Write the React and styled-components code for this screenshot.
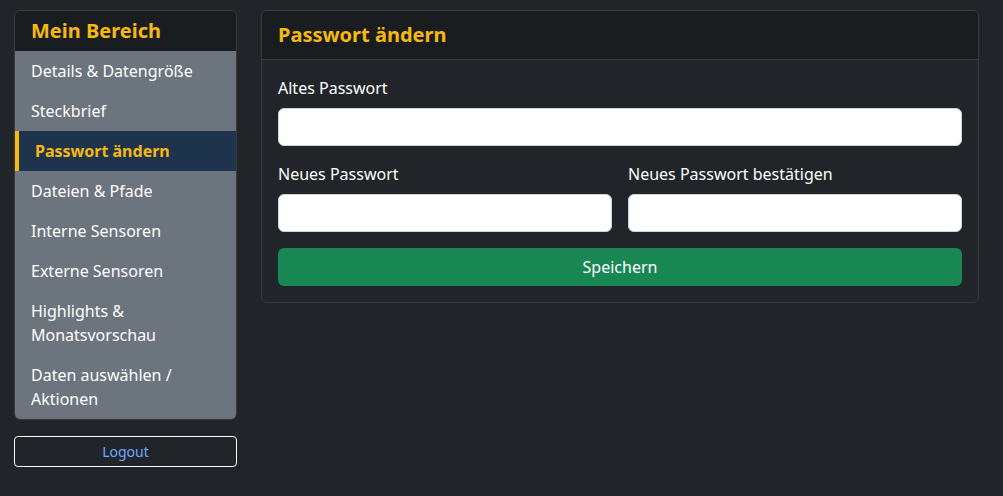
import React from 'react';
import styled, { createGlobalStyle } from 'styled-components';

const GlobalStyle = createGlobalStyle`
  html, body {
    margin: 0;
    background-color: #212529;
    color: #dee2e6;
    font-family: "Noto Sans", "Open Sans", sans-serif;
    font-size: 16px;
    line-height: 1.5;
  }
  * { box-sizing: border-box; }
`;

const Page = styled.div`
  display: grid;
  grid-template-columns: 223px 1fr;
  column-gap: 24px;
  align-items: start;
  padding: 10px 24px 20px 14px;
  min-height: 496px;
`;

const Sidebar = styled.aside`
  display: flex;
  flex-direction: column;
  gap: 16px;
`;

const Card = styled.div`
  border: 1px solid #373b3e;
  border-radius: 6px;
  overflow: hidden;
  background-color: #212529;
`;

const CardHeader = styled.div`
  background-color: #1a1d20;
  border-bottom: ${(p) => (p.$compact ? 'none' : '1px solid #373b3e')};
  padding: ${(p) => (p.$compact ? '8px 16px' : '12px 16px')};
`;

const CardTitle = styled.h5`
  margin: 0;
  font-size: 20px;
  font-weight: 700;
  line-height: 24px;
  color: #f7b90d;
`;

const NavList = styled.nav`
  display: flex;
  flex-direction: column;
  background-color: #6c757d;
`;

const NavItem = styled.a`
  display: block;
  padding: 8px 16px;
  font-size: 16px;
  line-height: 24px;
  text-decoration: none;
  color: ${(p) => (p.$active ? '#f7b90d' : '#ffffff')};
  font-weight: ${(p) => (p.$active ? 700 : 400)};
  background-color: ${(p) => (p.$active ? '#1e344c' : 'transparent')};
  border-left: ${(p) => (p.$active ? '4px solid #f7b90d' : 'none')};
  cursor: pointer;
`;

const LogoutButton = styled.button`
  width: 100%;
  height: 31px;
  background: transparent;
  border: 1px solid #f8f9fa;
  border-radius: 4px;
  color: #6ea8fe;
  font-family: inherit;
  font-size: 14px;
  cursor: pointer;
`;

const CardBody = styled.form`
  padding: 16px;
  display: flex;
  flex-direction: column;
  gap: 16px;
`;

const FieldRow = styled.div`
  display: grid;
  grid-template-columns: repeat(${(p) => p.$cols || 1}, 1fr);
  column-gap: 16px;
`;

const Field = styled.div`
  display: flex;
  flex-direction: column;
`;

const Label = styled.label`
  margin-bottom: 8px;
  color: #ffffff;
  font-size: 16px;
  line-height: 24px;
`;

const Input = styled.input`
  height: 38px;
  padding: 6px 12px;
  border: 1px solid #ced4da;
  border-radius: 6px;
  background-color: #ffffff;
  font-family: inherit;
  font-size: 16px;
  outline: none;
`;

const SaveButton = styled.button`
  height: 38px;
  border: none;
  border-radius: 6px;
  background-color: #198754;
  color: #ffffff;
  font-family: inherit;
  font-size: 16px;
  cursor: pointer;
`;

const navItems = [
  'Details & Datengröße',
  'Steckbrief',
  'Passwort ändern',
  'Dateien & Pfade',
  'Interne Sensoren',
  'Externe Sensoren',
  'Highlights & Monatsvorschau',
  'Daten auswählen / Aktionen',
];

export default function App() {
  return (
    <>
      <GlobalStyle />
      <Page>
        <Sidebar>
          <Card>
            <CardHeader $compact>
              <CardTitle>Mein Bereich</CardTitle>
            </CardHeader>
            <NavList>
              {navItems.map((item) => (
                <NavItem key={item} $active={item === 'Passwort ändern'}>
                  {item}
                </NavItem>
              ))}
            </NavList>
          </Card>
          <LogoutButton>Logout</LogoutButton>
        </Sidebar>

        <Card>
          <CardHeader>
            <CardTitle>Passwort ändern</CardTitle>
          </CardHeader>
          <CardBody onSubmit={(e) => e.preventDefault()}>
            <Field>
              <Label>Altes Passwort</Label>
              <Input type="password" />
            </Field>
            <FieldRow $cols={2}>
              <Field>
                <Label>Neues Passwort</Label>
                <Input type="password" />
              </Field>
              <Field>
                <Label>Neues Passwort bestätigen</Label>
                <Input type="password" />
              </Field>
            </FieldRow>
            <SaveButton type="submit">Speichern</SaveButton>
          </CardBody>
        </Card>
      </Page>
    </>
  );
}
